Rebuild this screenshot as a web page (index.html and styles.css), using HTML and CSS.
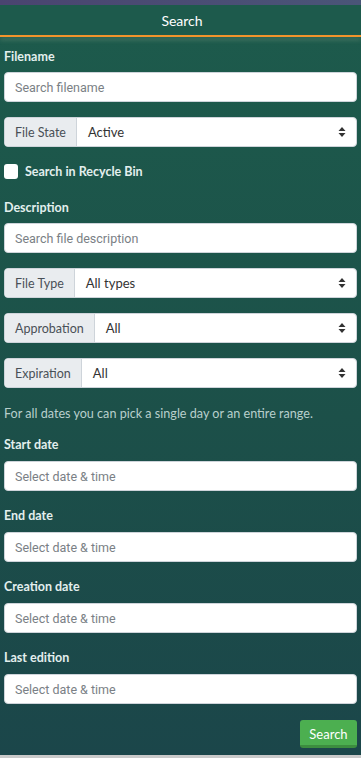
FILE: index.html
```html
<!DOCTYPE html>
<html>
<head>
<meta charset="utf-8">
<link rel="stylesheet" href="styles.css">
</head>
<body>
<div class="topbar"></div>
<header class="header">Search</header>
<div class="header-rule"></div>
<main class="content">
  <label class="label">Filename</label>
  <input class="input" type="text" placeholder="Search filename">

  <div class="group">
    <span class="addon">File State</span>
    <div class="select"><span>Active</span><svg class="caret" width="8" height="12" viewBox="0 0 8 12"><path d="M4 1 L7.5 5 H0.5 Z M4 11 L7.5 7 H0.5 Z" fill="#333"/></svg></div>
  </div>

  <div class="check-row">
    <span class="checkbox"></span>
    <span class="check-label">Search in Recycle Bin</span>
  </div>

  <label class="label label-desc">Description</label>
  <input class="input" type="text" placeholder="Search file description">

  <div class="group">
    <span class="addon">File Type</span>
    <div class="select"><span>All types</span><svg class="caret" width="8" height="12" viewBox="0 0 8 12"><path d="M4 1 L7.5 5 H0.5 Z M4 11 L7.5 7 H0.5 Z" fill="#333"/></svg></div>
  </div>

  <div class="group">
    <span class="addon">Approbation</span>
    <div class="select"><span>All</span><svg class="caret" width="8" height="12" viewBox="0 0 8 12"><path d="M4 1 L7.5 5 H0.5 Z M4 11 L7.5 7 H0.5 Z" fill="#333"/></svg></div>
  </div>

  <div class="group">
    <span class="addon">Expiration</span>
    <div class="select"><span>All</span><svg class="caret" width="8" height="12" viewBox="0 0 8 12"><path d="M4 1 L7.5 5 H0.5 Z M4 11 L7.5 7 H0.5 Z" fill="#333"/></svg></div>
  </div>

  <p class="help">For all dates you can pick a single day or an entire range.</p>

  <label class="label label-date first">Start date</label>
  <input class="input" type="text" placeholder="Select date &amp; time">

  <label class="label label-date">End date</label>
  <input class="input" type="text" placeholder="Select date &amp; time">

  <label class="label label-date">Creation date</label>
  <input class="input" type="text" placeholder="Select date &amp; time">

  <label class="label label-date">Last edition</label>
  <input class="input" type="text" placeholder="Select date &amp; time">

  <div class="actions">
    <button class="btn">Search</button>
  </div>
</main>
<div class="bottom-strip"></div>
</body>
</html>
```
FILE: styles.css
```css
* { box-sizing: border-box; }
html, body { margin: 0; padding: 0; }
body {
  width: 361px;
  height: 758px;
  overflow: hidden;
  font-family: Lato, "Noto Sans", sans-serif;
  background: linear-gradient(180deg, #1d5b4c 0%, #1c5049 55%, #1b464a 100%);
  display: flex;
  flex-direction: column;
}
.topbar {
  height: 5px;
  background: linear-gradient(90deg, #4a4470 0%, #4a5578 100%);
}
.header {
  height: 30px;
  line-height: 31px;
  text-align: center;
  color: #ffffff;
  font-size: 14px;
  padding-left: 3px;
  background: #1d5a4c;
}
.header-rule {
  height: 2px;
  background: #f2942c;
  box-shadow: 0 3px 4px rgba(190, 200, 170, 0.35);
}
.content {
  padding: 11px 4px 0 4px;
  display: flex;
  flex-direction: column;
}
.label {
  display: block;
  font-size: 12.5px;
  font-weight: 700;
  line-height: 18px;
  color: #e3efee;
  margin-bottom: 6px;
}
.label-desc { margin-top: 20px; }
.label-date { margin-top: 16px; margin-bottom: 7px; }
.label-date.first { margin-top: 13px; }
.input {
  display: block;
  width: 100%;
  height: 30px;
  border: 1px solid #ced4da;
  border-radius: 4px;
  background: #fff;
  padding: 0 10px;
  font-family: Roboto, "Noto Sans", sans-serif;
  font-size: 12.5px;
  color: #495057;
  outline: none;
}
.input::placeholder { color: #7a7f85; }
.group {
  display: flex;
  height: 30px;
  margin-top: 15px;
  border-radius: 4px;
  background: #fff;
  border: 1px solid #ced4da;
  overflow: hidden;
}
.addon {
  display: flex;
  align-items: center;
  padding: 0 10px 0 10px;
  background: #e9ecef;
  border-right: 1px solid #ced4da;
  font-size: 12.5px;
  color: #495057;
}
.select {
  flex: 1;
  display: flex;
  align-items: center;
  justify-content: space-between;
  padding: 0 10px 0 11px;
  font-size: 13px;
  color: #333;
}
.caret { display: block; }
.check-row {
  display: flex;
  align-items: center;
  height: 16px;
  margin-top: 16px;
}
.checkbox {
  width: 14px;
  height: 15px;
  background: #fff;
  border-radius: 3px;
  margin-right: 7px;
}
.check-label {
  font-size: 12.5px;
  font-weight: 700;
  color: #e3efee;
}
.help {
  margin: 17px 0 0 0;
  font-size: 12.6px;
  line-height: 18px;
  color: #b8cfcc;
}
.actions {
  display: flex;
  justify-content: flex-end;
  margin-top: 16px;
}
.btn {
  width: 57px;
  height: 28px;
  border: none;
  border-bottom: 3px solid #3c8d3f;
  border-radius: 3px;
  background: #4caf50;
  color: #fff;
  font-family: Lato, "Noto Sans", sans-serif;
  font-size: 13px;
  padding: 2px 0 0 0;
}
.bottom-strip {
  margin-top: auto;
  height: 3px;
  background: #c9c9c9;
}
```
